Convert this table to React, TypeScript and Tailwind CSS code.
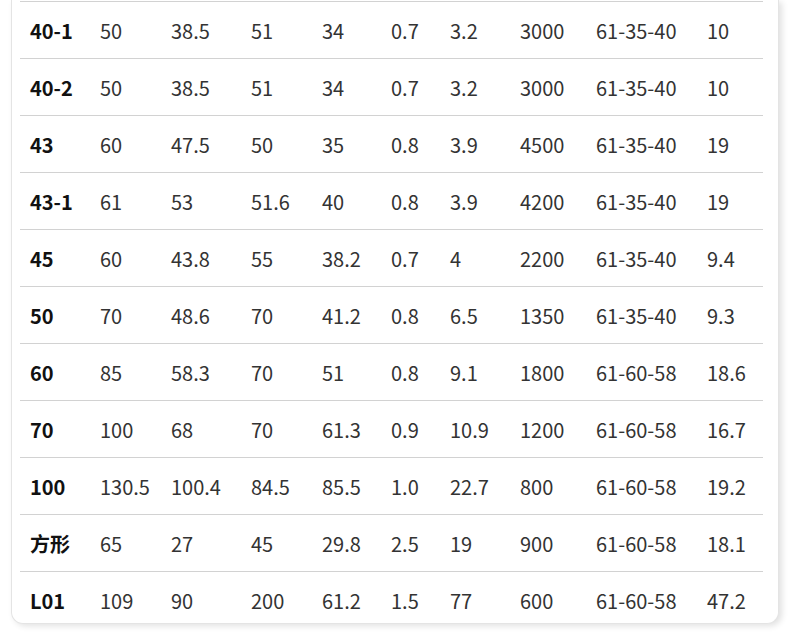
import React from "react";

const rows: string[][] = [
  ["40-1", "50", "38.5", "51", "34", "0.7", "3.2", "3000", "61-35-40", "10"],
  ["40-2", "50", "38.5", "51", "34", "0.7", "3.2", "3000", "61-35-40", "10"],
  ["43", "60", "47.5", "50", "35", "0.8", "3.9", "4500", "61-35-40", "19"],
  ["43-1", "61", "53", "51.6", "40", "0.8", "3.9", "4200", "61-35-40", "19"],
  ["45", "60", "43.8", "55", "38.2", "0.7", "4", "2200", "61-35-40", "9.4"],
  ["50", "70", "48.6", "70", "41.2", "0.8", "6.5", "1350", "61-35-40", "9.3"],
  ["60", "85", "58.3", "70", "51", "0.8", "9.1", "1800", "61-60-58", "18.6"],
  ["70", "100", "68", "70", "61.3", "0.9", "10.9", "1200", "61-60-58", "16.7"],
  ["100", "130.5", "100.4", "84.5", "85.5", "1.0", "22.7", "800", "61-60-58", "19.2"],
  ["方形", "65", "27", "45", "29.8", "2.5", "19", "900", "61-60-58", "18.1"],
  ["L01", "109", "90", "200", "61.2", "1.5", "77", "600", "61-60-58", "47.2"],
];

export default function App() {
  return (
    <div
      className="w-[790px] h-[632px] bg-white overflow-hidden"
      style={{ fontFamily: '"Noto Sans CJK SC", "Noto Sans", sans-serif' }}
    >
      <div className="ml-[11px] w-[768px] h-[624px] border-x border-b border-[#e4e4e4] rounded-b-[12px] shadow-[3px_2px_6px_rgba(0,0,0,0.12)] bg-white pt-[1px]">
        <div className="ml-[8px] w-[743px]">
          {rows.map((r, i) => {
            const last = i === rows.length - 1;
            return (
              <div
                key={i}
                className={
                  "grid grid-cols-[70px_71px_80px_71px_69px_59px_70px_76px_111px_66px] items-center border-t border-[#d2d2d2] text-[20px] " +
                  (last ? "h-[52px] pt-[6px]" : "h-[57px] pt-[2px]")
                }
              >
                {r.map((c, j) => (
                  <div
                    key={j}
                    className={
                      "pl-[10px] whitespace-nowrap " +
                      (j === 0 ? "font-bold text-[#111111]" : "text-[#333333]")
                    }
                  >
                    {c}
                  </div>
                ))}
              </div>
            );
          })}
        </div>
      </div>
    </div>
  );
}
